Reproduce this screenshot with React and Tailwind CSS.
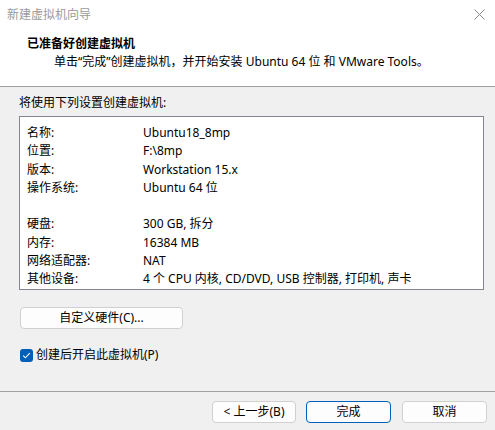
import React from "react";

const ROWS = [
    ["名称:", "Ubuntu18_8mp"],
    ["位置:", "F:\\8mp"],
    ["版本:", "Workstation 15.x"],
    ["操作系统:", "Ubuntu 64 位"],
    ["", ""],
    ["硬盘:", "300 GB, 拆分"],
    ["内存:", "16384 MB"],
    ["网络适配器:", "NAT"],
    ["其他设备:", "4 个 CPU 内核, CD/DVD, USB 控制器, 打印机, 声卡"],
];

function WinButton({ children, primary, className = "" }) {
    return (
        <button
            className={`h-[22px] rounded-[4px] border bg-[#fdfdfd] text-[12px] leading-none text-black ${
                primary ? "border-[#005fb8]" : "border-[#d0d0d0]"
            } ${className}`}
        >
            {children}
        </button>
    );
}

export default function App() {
    return (
        <div className="w-[495px] h-[430px] bg-[#f0f0f0] flex flex-col overflow-hidden text-[12px] text-black font-['Noto_Sans','Noto_Sans_CJK_SC',sans-serif]">
            {/* header */}
            <div className="h-[87px] bg-white border-b border-[#a0a0a0] shrink-0">
                <div className="h-[30px] flex items-center justify-between pl-[7px] pr-[10px]">
                    <span className="text-[#9a9a9a]">新建虚拟机向导</span>
                    <svg width="11" height="11" viewBox="0 0 11 11" className="mt-[-2px]">
                        <path d="M0.5 0.5 L10.5 10.5 M10.5 0.5 L0.5 10.5" stroke="#8a8a8a" strokeWidth="1" />
                    </svg>
                </div>
                <div className="mt-[5px] pl-[27px] leading-[18px] font-bold">已准备好创建虚拟机</div>
                <div className="pl-[54px] leading-[18px]">
                    单击“完成”创建虚拟机，并开始安装 Ubuntu 64 位 和 VMware Tools。
                </div>
            </div>

            {/* body */}
            <div className="pt-[7px] pl-[19px] leading-[18px]">将使用下列设置创建虚拟机:</div>
            <div className="ml-[19px] mt-[4px] w-[465px] h-[174px] bg-white border border-[#828790] pt-[7px] pl-[7px]">
                {ROWS.map(([k, v], i) => (
                    <div key={i} className="flex h-[18.25px] leading-[18px]">
                        <span className="w-[116px] shrink-0">{k}</span>
                        <span>{v}</span>
                    </div>
                ))}
            </div>

            <WinButton className="ml-[20px] mt-[17px] w-[163px]">自定义硬件(C)...</WinButton>

            <label className="ml-[20px] mt-[17px] flex items-center gap-[3px] leading-[18px]">
                <span className="w-[13px] h-[13px] rounded-[3px] bg-[#005fb8] flex items-center justify-center">
                    <svg width="9" height="9" viewBox="0 0 9 9">
                        <path d="M1.2 4.6 L3.4 6.8 L7.8 2.2" fill="none" stroke="white" strokeWidth="1.1" />
                    </svg>
                </span>
                创建后开启此虚拟机(P)
            </label>

            {/* footer */}
            <div className="mt-auto h-[39px] border-t border-[#a0a0a0] flex justify-end items-start pt-[9px] pr-[8px] gap-[10px]">
                <WinButton className="w-[84px]">&lt; 上一步(B)</WinButton>
                <WinButton primary className="w-[85px]">完成</WinButton>
                <WinButton className="w-[85px] ml-[1px]">取消</WinButton>
            </div>
        </div>
    );
}
